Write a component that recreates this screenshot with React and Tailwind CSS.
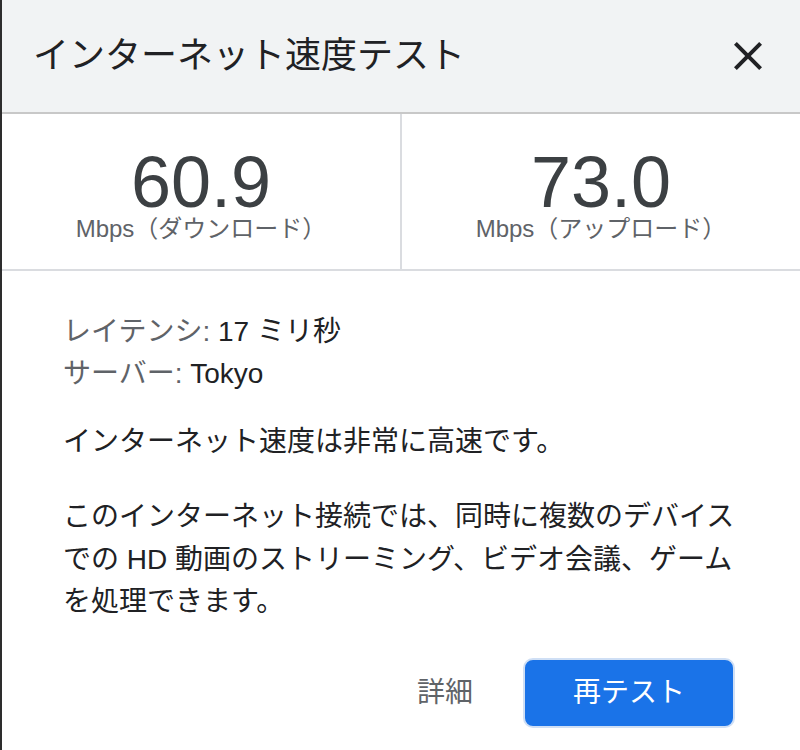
import React from 'react';

const FONT = "font-['Liberation_Sans','Noto_Sans_CJK_JP',sans-serif]";

function CloseIcon() {
  return (
    <svg width="48" height="48" viewBox="0 0 24 24" fill="#202124">
      <path d="M19 6.41L17.59 5 12 10.59 6.41 5 5 6.41 10.59 12 5 17.59 6.41 19 12 13.41 17.59 19 19 17.59 13.41 12z" />
    </svg>
  );
}

function Stat({ value, label, divider }) {
  return (
    <div className={`flex flex-1 flex-col items-center pt-[32px] ${divider ? 'border-r-2 border-[#dadce0]' : ''}`}>
      <div className="text-[72px] leading-[72px] text-[#3c4043]">{value}</div>
      <div className="text-[24px] leading-[22px] text-[#5f6368]">{label}</div>
    </div>
  );
}

export default function App() {
  return (
    <div className={`flex h-[750px] w-[800px] bg-white ${FONT}`}>
      <div className="w-[2px] shrink-0 bg-[#2d2d2d]"></div>
      <div className="flex flex-1 flex-col">
        {/* Header */}
        <header className="flex h-[114px] shrink-0 items-center justify-between border-b-2 border-[#c8c8c8] bg-[#f1f3f4] pl-[31px] pr-[28px]">
          <h1 className="text-[36px] leading-none text-[#202124]">インターネット速度テスト</h1>
          <CloseIcon />
        </header>

        {/* Results */}
        <section className="flex h-[157px] shrink-0 border-b-2 border-[#dadce0]">
          <Stat value="60.9" label="Mbps（ダウンロード）" divider />
          <Stat value="73.0" label="Mbps（アップロード）" />
        </section>

        {/* Details */}
        <main className="flex flex-1 flex-col pl-[61px] pr-[50px] pt-[40px] text-[28px] leading-[42px] text-[#202124]">
          <div>
            <span className="text-[#5f6368]">レイテンシ: </span>17 ミリ秒
          </div>
          <div>
            <span className="text-[#5f6368]">サーバー: </span>Tokyo
          </div>
          <p className="mt-[26px]">インターネット速度は非常に高速です。</p>
          <p className="mt-[33px] whitespace-nowrap leading-[42.5px]">
            このインターネット接続では、同時に複数のデバイス
            <br />
            での HD 動画のストリーミング、ビデオ会議、ゲーム
            <br />
            を処理できます。
          </p>

          <div className="mt-[34px] flex items-center justify-end gap-[50px] pr-[15px]">
            <button type="button" className="text-[28px] text-[#5f6368]">
              詳細
            </button>
            <button
              type="button"
              className="flex h-[70px] w-[212px] items-center justify-center rounded-[10px] border-2 border-[#cfdff5] bg-[#1a73e8] text-[28px] text-white"
            >
              再テスト
            </button>
          </div>
        </main>
      </div>
    </div>
  );
}
